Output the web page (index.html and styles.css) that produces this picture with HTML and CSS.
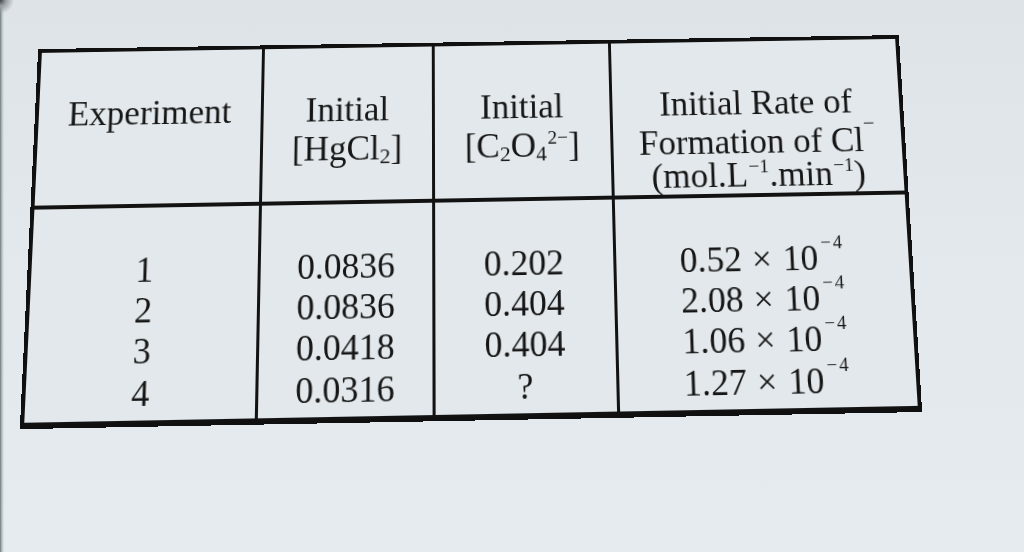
FILE: index.html
```html
<!DOCTYPE html>
<html lang="en">
<head>
<meta charset="utf-8">
<title>Kinetics table</title>
<link rel="stylesheet" href="styles.css">
</head>
<body>
<div class="page">
  <div class="sheet">
    <div class="grid">
      <div class="cell head"><div class="ln">Experiment</div></div>
      <div class="cell head"><div class="ln">Initial</div><div class="ln">[HgCl<span class="sub">2</span>]</div></div>
      <div class="cell head"><div class="ln">Initial</div><div class="ln">[C<span class="sub">2</span>O<span class="sub">4</span><span class="sup ion">2−</span>]</div></div>
      <div class="cell head rate"><div class="ln">Initial Rate of</div><div class="ln">Formation of Cl<span class="minus">−</span></div><div class="ln tight">(mol.L<span class="sup">−1</span>.min<span class="sup">−1</span>)</div></div>

      <div class="cell body"><div class="ln">1</div><div class="ln">2</div><div class="ln">3</div><div class="ln">4</div></div>
      <div class="cell body"><div class="ln">0.0836</div><div class="ln">0.0836</div><div class="ln">0.0418</div><div class="ln">0.0316</div></div>
      <div class="cell body"><div class="ln">0.202</div><div class="ln">0.404</div><div class="ln">0.404</div><div class="ln">?</div></div>
      <div class="cell body"><div class="ln">0.52<span class="x">×</span>10<span class="exp">−4</span></div><div class="ln">2.08<span class="x">×</span>10<span class="exp">−4</span></div><div class="ln">1.06<span class="x">×</span>10<span class="exp">−4</span></div><div class="ln">1.27<span class="x">×</span>10<span class="exp">−4</span></div></div>
    </div>
  </div>
</div>
</body>
</html>
```

FILE: styles.css
```css
html, body {
  margin: 0;
  padding: 0;
  width: 1024px;
  height: 552px;
  overflow: hidden;
}

body {
  background:
    radial-gradient(circle at 0 0, #3c3f42 0, #9aa0a4 6px, rgba(220,226,229,0) 14px),
    linear-gradient(90deg, #6f787c 0, #b9c2c6 2px, rgba(226,232,235,0) 4px),
    linear-gradient(180deg, #dde3e6 0%, #e2e8eb 45%, #e5ebee 100%);
  font-family: "Liberation Serif", "Times New Roman", serif;
  color: #161616;
}

.page {
  width: 1024px;
  height: 552px;
}

.sheet {
  width: 884px;
  height: 380px;
  transform-origin: 0 0;
  transform: matrix3d(0.979934, -0.0156587, 0, 0.0000067672, -0.0505527, 0.947977, 0, -0.000121834, 0, 0, 1, 0, 40, 51, 0, 1) translate(-2px, -2px);
}

.grid {
  box-sizing: border-box;
  width: 884px;
  height: 380px;
  border: 4px solid #101010;
  background: #121212;
  display: grid;
  grid-template-columns: 224.5px 171px 178px 293.5px;
  grid-template-rows: 157.25px 209.25px;
  column-gap: 3px;
  row-gap: 3.5px;
}

.cell {
  background: #e2e8eb;
  text-align: center;
  font-size: 35.5px;
  white-space: nowrap;
}

.head {
  padding-top: 44px;
  line-height: 40px;
}

.head .tight {
  line-height: 29px;
}

.body {
  padding-top: 42px;
  line-height: 40.3px;
}

.sub {
  font-size: 0.62em;
  line-height: 0;
  vertical-align: -3.5px;
}

.sup {
  font-size: 19.5px;
  line-height: 0;
  vertical-align: 14px;
  margin-left: 1px;
}

.ion {
  vertical-align: 13px;
}

.minus {
  font-size: 21px;
  line-height: 0;
  vertical-align: 22px;
}

.x {
  margin: 0 11px 0 10px;
}

.exp {
  font-size: 18.5px;
  line-height: 0;
  vertical-align: 21px;
  margin-left: 3px;
  letter-spacing: 2px;
}
```
